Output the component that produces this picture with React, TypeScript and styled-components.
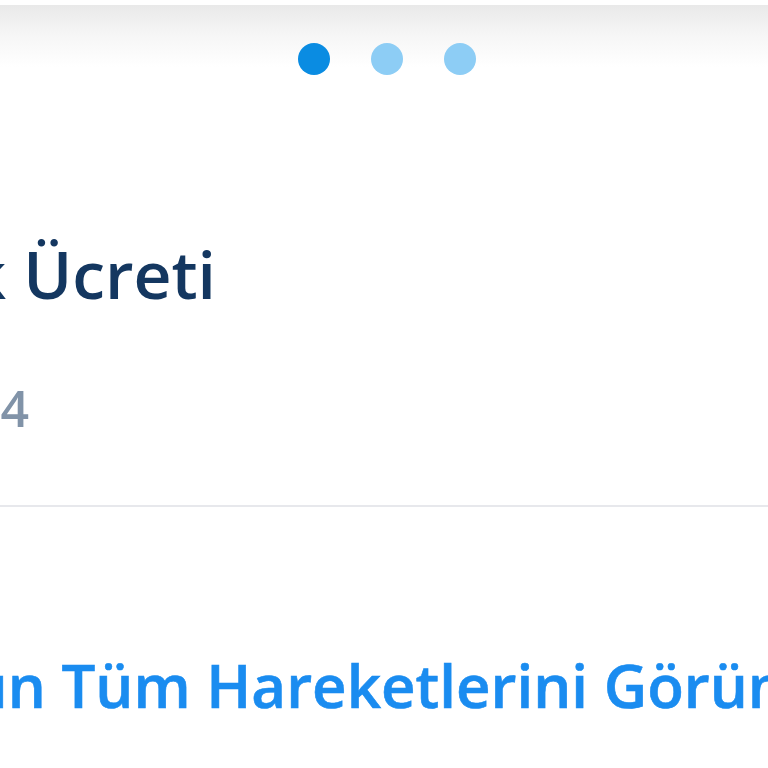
import React from "react";
import styled, { createGlobalStyle } from "styled-components";

const GlobalStyle = createGlobalStyle`
  html, body {
    margin: 0;
    padding: 0;
    background: #ffffff;
    overflow: hidden;
  }
  body {
    font-family: "Open Sans", "Noto Sans", "Liberation Sans", sans-serif;
  }
`;

const Page = styled.div`
  width: 768px;
  height: 768px;
  overflow: hidden;
  display: flex;
  flex-direction: column;
  background: #ffffff;
  padding-top: 5px;
  box-sizing: border-box;
`;

const PagerBand = styled.div`
  display: flex;
  justify-content: center;
  gap: 41px;
  padding-top: 38px;
  padding-left: 5px;
  background: linear-gradient(to bottom, #e9e9e9 0px, #f6f6f6 30px, #ffffff 62px);
`;

const Dot = styled.span<{ $active?: boolean }>`
  width: 32px;
  height: 32px;
  border-radius: 50%;
  background: ${(p) => (p.$active ? "#0a8ce2" : "#8dcdf5")};
`;

const RightEdgeRow = styled.div<{ $width: number; $top: number }>`
  display: flex;
  justify-content: flex-end;
  width: ${(p) => p.$width}px;
  margin-top: ${(p) => p.$top}px;
  white-space: nowrap;
`;

const Title = styled.span`
  font-size: 66px;
  line-height: 80px;
  font-weight: 600;
  color: #143760;
  flex-shrink: 0;
`;

const DateText = styled.span`
  font-size: 50px;
  line-height: 60px;
  font-weight: 600;
  color: #8193a8;
  flex-shrink: 0;
`;

const Divider = styled.hr`
  border: none;
  height: 2px;
  margin: 67px 0 0 0;
  background: #e7e8ec;
  width: 100%;
`;

const LinkRow = styled.div`
  margin-top: 142px;
  white-space: nowrap;
`;

const LinkText = styled.a`
  display: inline-block;
  margin-left: -232px;
  font-size: 60px;
  line-height: 72px;
  font-weight: 600;
  -webkit-text-stroke: 0.6px #1a8cf0;
  color: #1a8cf0;
  text-decoration: none;
`;

export default function App() {
  return (
    <>
      <GlobalStyle />
      <Page>
        <PagerBand>
          <Dot $active />
          <Dot />
          <Dot />
        </PagerBand>
        <RightEdgeRow $width={216} $top={158}>
          <Title>Kart Üyelik Ücreti</Title>
        </RightEdgeRow>
        <RightEdgeRow $width={29} $top={65}>
          <DateText>12.03.2024</DateText>
        </RightEdgeRow>
        <Divider />
        <LinkRow>
          <LinkText href="#">Kartınızın Tüm Hareketlerini Görüntüleyin</LinkText>
        </LinkRow>
      </Page>
    </>
  );
}
